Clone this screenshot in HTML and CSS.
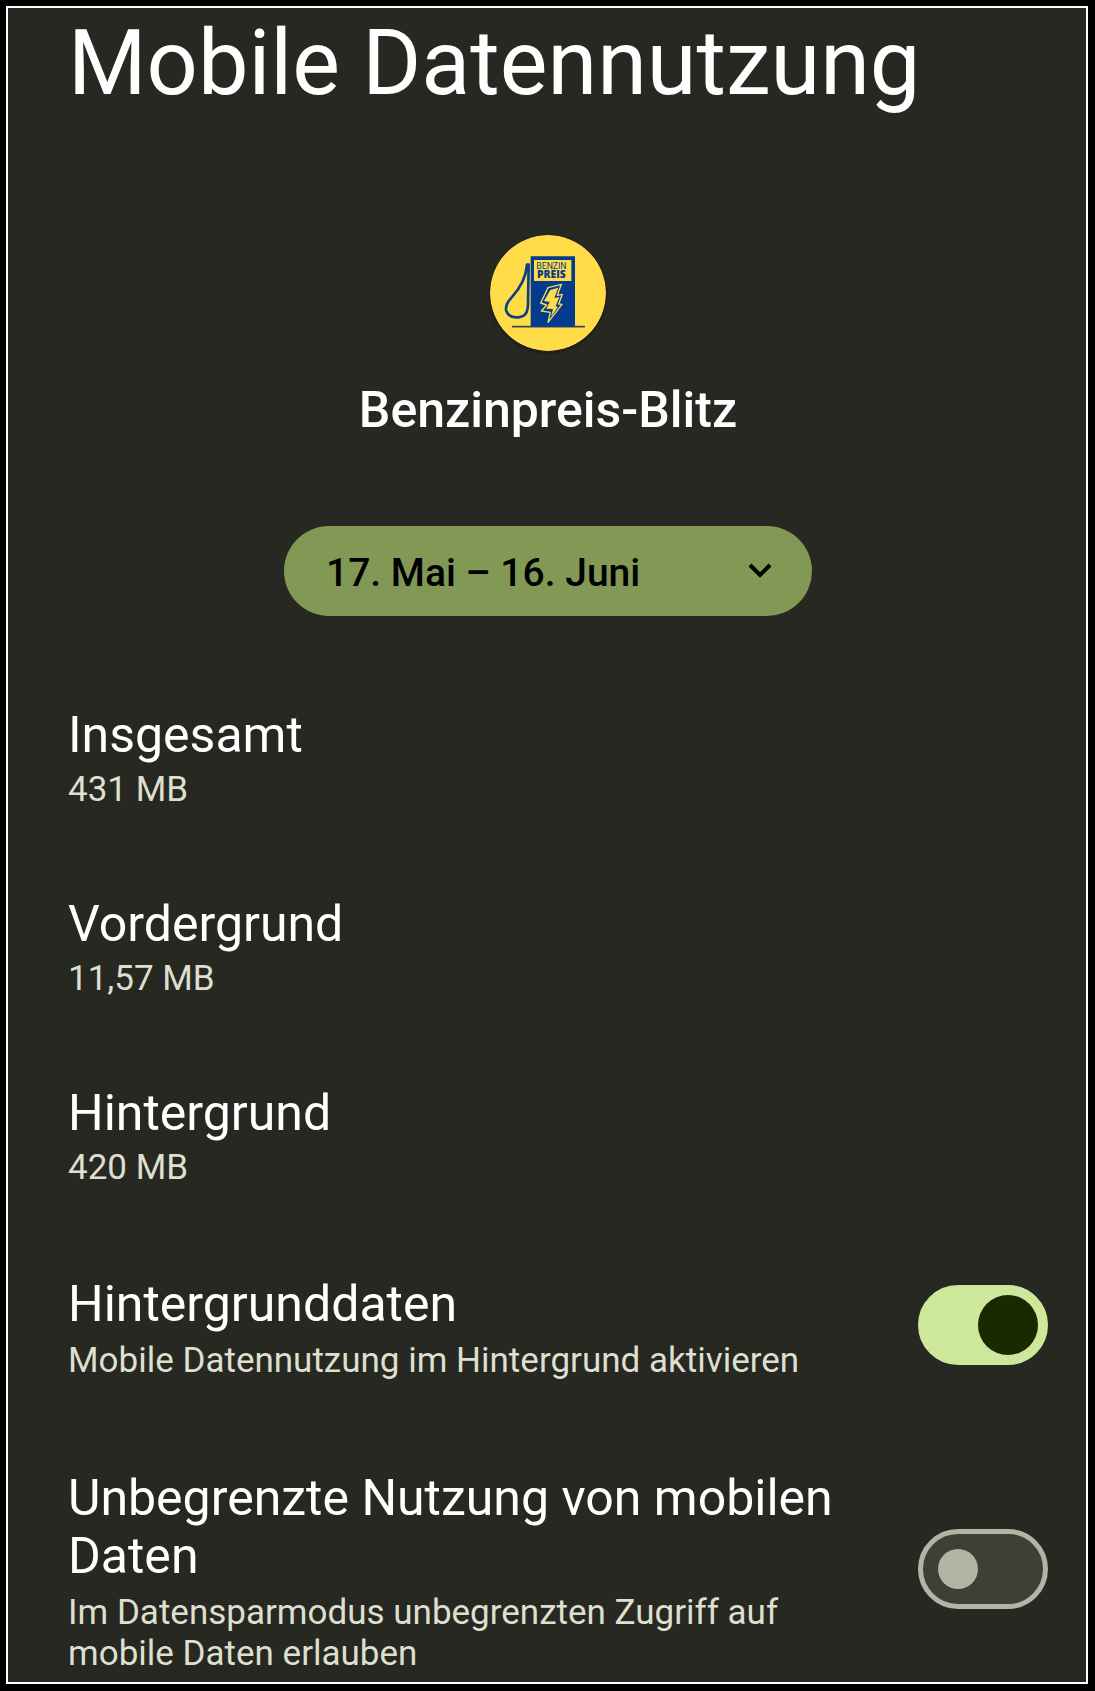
FILE: index.html
```html
<!DOCTYPE html>
<html lang="de">
<head>
<meta charset="utf-8">
<meta name="viewport" content="width=device-width, initial-scale=1">
<title>Mobile Datennutzung</title>
<link rel="stylesheet" href="styles.css">
</head>
<body>
<main class="panel">
  <h1 class="page-title">Mobile Datennutzung</h1>

  <header class="app">
    <svg class="app-icon" viewBox="30 30 348 348" role="img" aria-label="Benzinpreis-Blitz">
      <circle cx="204" cy="204" r="174" fill="#ffdc48"/>
      <path d="M96 305H315" stroke="#3c4a55" stroke-width="5"/>
      <path d="M152 94H285V305H152Z" fill="#053b8c"/>
      <path d="M162 105H274V168H162Z" fill="#ffdc48"/>
      <path d="M141 119C138 160 120 190 95 217C82 231 75 245 79 258C84 273 99 278 115 277C137 275 143 262 144 238L146 119Z" fill="none" stroke="#0b4183" stroke-width="8" stroke-linejoin="round"/>
      <text class="logo-light" x="169" y="132">BENZIN</text>
      <text class="logo-heavy" x="171" y="160">PREIS</text>
      <path d="M204 188L244 178L232 211L247 208L236 237L246 238L204 292L211 262L184 258L200 240L182 234Z" fill="#053b8c" stroke="#f4dc5c" stroke-width="4" stroke-linejoin="round"/>
      <path d="M211 195L235 188L223 219L238 216L227 244L234 245L213 275L219 252L199 251L209 231L192 228Z" fill="#ffdc48"/>
    </svg>
    <h2 class="app-name">Benzinpreis-Blitz</h2>
  </header>

  <div class="period">
    <select class="period-select" aria-label="Zeitraum">
      <option>17. Mai – 16. Juni</option>
    </select>
    <svg class="period-arrow" viewBox="0 0 24 16" aria-hidden="true"><path d="M2 2L12 12L22 2" fill="none" stroke="#000" stroke-width="4"/></svg>
  </div>

  <dl class="usage">
    <div class="usage-item"><dt class="label">Insgesamt</dt><dd class="detail">431 MB</dd></div>
    <div class="usage-item"><dt class="label">Vordergrund</dt><dd class="detail">11,57 MB</dd></div>
    <div class="usage-item"><dt class="label">Hintergrund</dt><dd class="detail">420 MB</dd></div>
  </dl>

  <div class="settings">
    <label class="setting" for="background-data">
      <span class="setting-text">
        <span class="label">Hintergrunddaten</span>
        <span class="detail">Mobile Datennutzung im Hintergrund aktivieren</span>
      </span>
      <input class="switch" type="checkbox" role="switch" id="background-data" checked>
    </label>
    <label class="setting" for="unrestricted-data">
      <span class="setting-text">
        <span class="label">Unbegrenzte Nutzung von mobilen Daten</span>
        <span class="detail">Im Datensparmodus unbegrenzten Zugriff auf mobile Daten erlauben</span>
      </span>
      <input class="switch" type="checkbox" role="switch" id="unrestricted-data">
    </label>
  </div>
</main>
</body>
</html>
```
FILE: styles.css
```css
* {
  box-sizing: border-box;
}

body {
  margin: 0;
  padding: 6px 7px 7px 6px;
  background: #000;
  color: #fff;
  font-family: Roboto, "Liberation Sans", sans-serif;
}

.panel {
  padding: 3px 38px 8px 60px;
  border: 2px solid #fff;
  background: #272822;
}

.page-title {
  margin: 0;
  font-size: 90px;
  line-height: 106px;
  font-weight: 400;
}

/* Centred blocks ignore the uneven side padding of the panel */
.app,
.period {
  margin-left: -20px;
}

.app {
  display: flex;
  flex-direction: column;
  align-items: center;
  gap: 30px;
  margin-top: 118px;
}

.app-icon {
  width: 116px;
  height: 116px;
  border-radius: 50%;
  box-shadow: 0 2px 3px #1a1b16;
}

.app-name {
  margin: 0;
  font-size: 50px;
  line-height: 58px;
  font-weight: 500;
}

.logo-light,
.logo-heavy {
  fill: #053b8c;
}

.logo-light {
  font: 400 26px Roboto, sans-serif;
}

.logo-heavy {
  font: 800 31px "Open Sans", sans-serif;
}

.period {
  display: grid;
  justify-content: center;
  align-items: center;
  grid-template-columns: minmax(0, 528px);
  margin-top: 87px;
}

.period-select {
  grid-area: 1 / 1;
  width: 100%;
  height: 90px;
  padding: 4px 96px 0 42px;
  border: 0;
  border-radius: 45px;
  appearance: none;
  background: #829955;
  color: #000;
  font: 500 39px Roboto, "Liberation Sans", sans-serif;
}

.period-arrow {
  grid-area: 1 / 1;
  justify-self: end;
  width: 24px;
  height: 16px;
  margin-right: 40px;
  pointer-events: none;
}

.usage {
  display: flex;
  flex-direction: column;
  gap: 85px;
  margin: 90px 0 0;
}

.usage-item {
  display: flex;
  flex-direction: column;
  gap: 5px;
}

.label {
  font-size: 50px;
  line-height: 58px;
}

.detail {
  margin: 0;
  color: #dddfcf;
  font-size: 35px;
  line-height: 41px;
}

.settings {
  display: flex;
  flex-direction: column;
  gap: 82px;
  margin-top: 81px;
}

.setting {
  display: flex;
  align-items: center;
  gap: 80px;
}

.setting-text {
  display: flex;
  flex: 1;
  flex-direction: column;
  gap: 7px;
  padding-top: 6px;
}

.switch {
  display: flex;
  flex: none;
  align-items: center;
  width: 130px;
  height: 80px;
  margin: 0;
  padding: 0 15px;
  border: 5px solid #b2b4a5;
  border-radius: 40px;
  appearance: none;
  background: #3e3f37;
}

.switch::before {
  width: 40px;
  height: 40px;
  border-radius: 50%;
  background: #b2b4a5;
  content: "";
}

.switch:checked {
  justify-content: flex-end;
  padding: 0 5px;
  border-color: #cde79b;
  background: #cde79b;
}

.switch:checked::before {
  width: 60px;
  height: 60px;
  background: #1b2900;
}
```
